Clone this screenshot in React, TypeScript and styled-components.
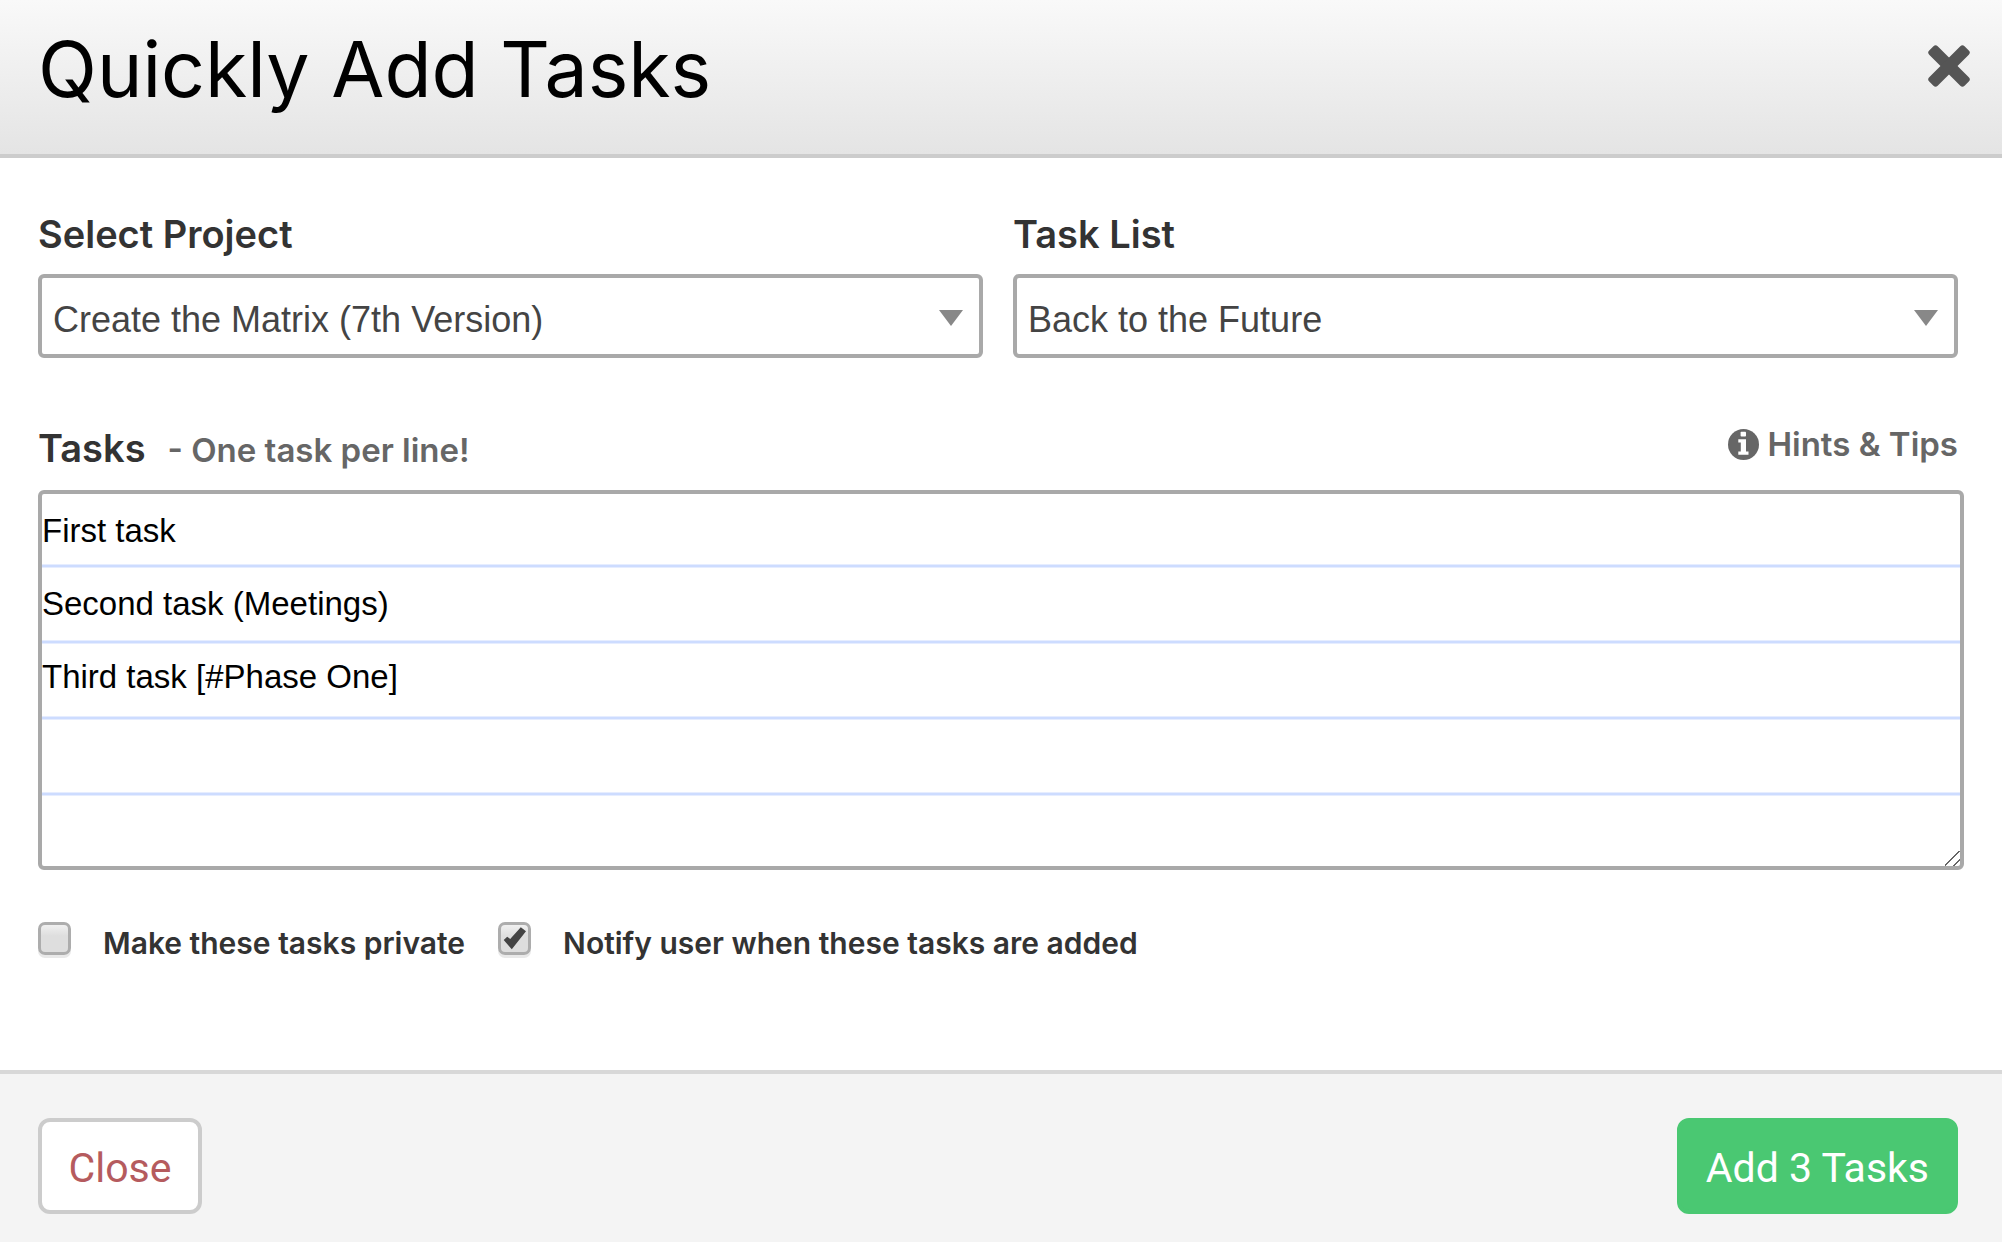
import React, { useState } from 'react';
import styled, { createGlobalStyle } from 'styled-components';

const sans = '"Inter", "Helvetica Neue", sans-serif';
const arial = 'Arial, "Liberation Sans", sans-serif';

const GlobalStyle = createGlobalStyle`
  *, *::before, *::after { box-sizing: border-box; }
  body { margin: 0; background: #fff; color: #333; font-family: ${sans}; }
`;

const Dialog = styled.div`
  display: flex;
  flex-direction: column;
  min-height: 100vh;
`;

const Header = styled.header`
  display: flex;
  justify-content: space-between;
  align-items: flex-start;
  padding: 21px 32px 37px 38px;
  border-bottom: 4px solid #ccc;
  background: linear-gradient(#f9f9f9, #e4e4e4);
`;

const Title = styled.h1`
  margin: 0;
  font-size: 77px;
  font-weight: 400;
  line-height: 96px;
  color: #000;
`;

const IconButton = styled.button`
  display: flex;
  margin: 24px 0 0;
  padding: 0;
  border: 0;
  background: none;
  color: #555;
  cursor: pointer;
`;

const Body = styled.form`
  flex: 1;
  padding: 52px 44px 60px 38px;
`;

const FieldRow = styled.div`
  display: grid;
  grid-template-columns: 1fr 1fr;
  gap: 30px;
  margin-bottom: 66px;
`;

const Field = styled.div`
  display: flex;
  flex-direction: column;
  gap: 16px;
`;

const Label = styled.label`
  font-size: 38px;
  font-weight: 600;
  line-height: 48px;
`;

const SelectBox = styled.div`
  position: relative;
`;

const Select = styled.select`
  display: block;
  width: 100%;
  height: 84px;
  padding: 6px 60px 0 11px;
  appearance: none;
  border: 4px solid #a9a9a9;
  border-radius: 6px;
  background: #fff;
  color: #444;
  font-family: ${arial};
  font-size: 36px;
`;

const Arrow = styled.svg`
  position: absolute;
  top: 36px;
  right: 20px;
  pointer-events: none;
`;

const TasksHeader = styled.div`
  display: flex;
  justify-content: space-between;
  align-items: flex-start;
  margin-bottom: 18px;
`;

const TasksTitle = styled.div`
  display: flex;
  align-items: baseline;
  gap: 22px;
`;

const Hint = styled.span`
  font-size: 33px;
  font-weight: 600;
  color: #666;
`;

const HintsLink = styled.a`
  display: flex;
  align-items: center;
  gap: 8px;
  font-size: 33px;
  font-weight: 600;
  line-height: 40px;
  color: #666;
  text-decoration: none;
`;

const TaskInput = styled.textarea`
  display: block;
  width: calc(100% + 6px);
  height: 380px;
  padding: 0;
  border: 4px solid #a9a9a9;
  border-radius: 6px;
  outline: 0;
  resize: both;
  overflow: hidden;
  background: #fff linear-gradient(#fff 70px, #e6edff 70px, #e6edff 71px, #cddcff 71px, #cddcff 73px, #e6edff 73px, #e6edff 74px, #fff 74px) 0 0 / 100% 76px;
  color: #000;
  font-family: ${arial};
  font-size: 33px;
  line-height: 73px;

  &::-webkit-resizer {
    background: linear-gradient(
      135deg,
      transparent 46%, #666 46%, #666 53%, transparent 53%,
      transparent 76%, #666 76%, #666 83%, transparent 83%
    );
  }
`;

const Options = styled.div`
  display: flex;
  flex-wrap: wrap;
  gap: 33px;
  margin-top: 52px;
`;

const Option = styled.label`
  display: flex;
  align-items: flex-start;
  gap: 32px;
  font-size: 30px;
  font-weight: 600;
  line-height: 42px;
`;

const CheckCell = styled.span`
  display: grid;
  & > * { grid-area: 1 / 1; }
`;

const Checkbox = styled.input`
  width: 33px;
  height: 33px;
  margin: 0;
  appearance: none;
  border: 3px solid #adadad;
  border-radius: 7px;
  background: linear-gradient(#f0f0f0, #dedede 40%);
  box-shadow: 0 3px 0 #e9e9e9;
  & + svg { visibility: hidden; pointer-events: none; }
  &:checked + svg { visibility: visible; }
`;

const Footer = styled.footer`
  display: flex;
  justify-content: space-between;
  padding: 44px 44px 28px 38px;
  border-top: 4px solid #d8d8d8;
  background: #f4f4f4;
`;

const Button = styled.button<{ $primary?: boolean }>`
  min-width: 164px;
  height: 96px;
  padding: 4px 25px 0;
  border: 4px solid ${(p) => (p.$primary ? '#4ac872' : '#ccc')};
  border-radius: 12px;
  background: ${(p) => (p.$primary ? '#4ac872' : '#fff')};
  color: ${(p) => (p.$primary ? '#fff' : '#b55b5e')};
  font-family: Roboto, sans-serif;
  font-size: 41px;
  cursor: pointer;
`;

function SelectField({ id, label, options }: { id: string; label: string; options: string[] }) {
  return (
    <Field>
      <Label htmlFor={id}>{label}</Label>
      <SelectBox>
        <Select id={id}>
          {options.map((o) => (
            <option key={o}>{o}</option>
          ))}
        </Select>
        <Arrow width="24" height="16" viewBox="0 0 24 16" aria-hidden="true">
          <path d="M0 0H24L12 16Z" fill="#888" />
        </Arrow>
      </SelectBox>
    </Field>
  );
}

function CheckOption({ label, initial }: { label: string; initial: boolean }) {
  return (
    <Option>
      <CheckCell>
        <Checkbox type="checkbox" defaultChecked={initial} />
        <svg width="33" height="33" viewBox="0 0 33 33" aria-hidden="true">
          <path d="M5.7 18L9.2 14.7L12.2 17L22.8 5.3L28 9.3L13.8 27.3Z" fill="#444" />
        </svg>
      </CheckCell>
      {label}
    </Option>
  );
}

function InfoIcon() {
  return (
    <svg width="31" height="31" viewBox="0 0 31 31" aria-hidden="true">
      <circle cx="15.5" cy="15.5" r="15.5" fill="currentColor" />
      <rect x="12.6" y="2.8" width="5.4" height="4.8" rx="0.8" fill="#fff" />
      <path d="M10.3 10.2H18V22.6H20.5V25.8H10.3V22.6H12.8V13.4H10.3Z" fill="#fff" />
    </svg>
  );
}

export default function App() {
  const [tasks, setTasks] = useState('First task\nSecond task (Meetings)\nThird task [#Phase One]');
  const count = tasks.split('\n').filter((t) => t.trim()).length;

  return (
    <Dialog role="dialog" aria-labelledby="dialog-title">
      <GlobalStyle />
      <Header>
        <Title id="dialog-title">Quickly Add Tasks</Title>
        <IconButton type="button" aria-label="Close dialog">
          <svg width="42" height="42" viewBox="-21 -21 42 42" aria-hidden="true" fill="currentColor">
            <rect x="-25" y="-6" width="50" height="12" rx="3" transform="rotate(45)" />
            <rect x="-25" y="-6" width="50" height="12" rx="3" transform="rotate(-45)" />
          </svg>
        </IconButton>
      </Header>
      <Body id="task-form" onSubmit={(e) => e.preventDefault()}>
        <FieldRow>
          <SelectField id="project" label="Select Project" options={['Create the Matrix (7th Version)']} />
          <SelectField id="task-list" label="Task List" options={['Back to the Future']} />
        </FieldRow>
        <TasksHeader>
          <TasksTitle>
            <Label htmlFor="tasks">Tasks</Label>
            <Hint>- One task per line!</Hint>
          </TasksTitle>
          <HintsLink href="#hints">
            <InfoIcon />
            Hints &amp; Tips
          </HintsLink>
        </TasksHeader>
        <TaskInput id="tasks" spellCheck={false} value={tasks} onChange={(e) => setTasks(e.target.value)} />
        <Options>
          <CheckOption label="Make these tasks private" initial={false} />
          <CheckOption label="Notify user when these tasks are added" initial />
        </Options>
      </Body>
      <Footer>
        <Button type="button">Close</Button>
        <Button type="submit" form="task-form" $primary>
          {`Add ${count} Tasks`}
        </Button>
      </Footer>
    </Dialog>
  );
}
